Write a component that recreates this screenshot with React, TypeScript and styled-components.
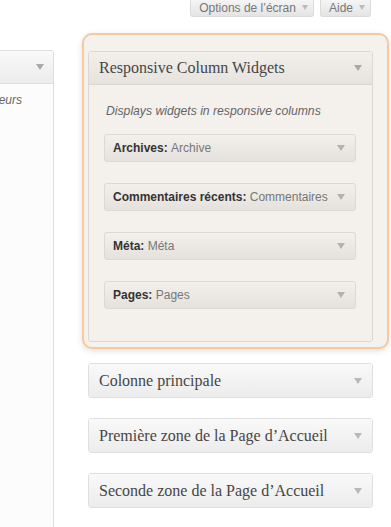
import styled, { createGlobalStyle } from 'styled-components'

const GlobalStyle = createGlobalStyle`
  html, body {
    margin: 0;
    padding: 0;
    background: #fff;
  }
  body {
    font-family: "Liberation Sans", Arial, sans-serif;
  }
  * {
    box-sizing: border-box;
  }
`

const Page = styled.div`
  min-height: 100vh;
  display: flex;
  flex-direction: column;
  overflow: hidden;
`

const ScreenMeta = styled.div`
  display: flex;
  justify-content: flex-end;
  gap: 6px;
  height: 33px;
  padding-right: 20px;
`

const MetaTab = styled.button`
  display: flex;
  align-items: center;
  gap: 6px;
  height: 17px;
  padding: 0 5px 1px 8px;
  border: 1px solid #dcdcdc;
  border-top: none;
  border-radius: 0 0 3px 3px;
  background: linear-gradient(to bottom, #f5f5f5, #e4e4e4);
  color: #777;
  font-family: "Liberation Sans", Arial, sans-serif;
  font-size: 12px;
  line-height: 16px;
`

const Arrow = styled.span<{ $w?: number; $h?: number; $color?: string }>`
  display: inline-block;
  flex: none;
  width: 0;
  height: 0;
  border-left: ${(p) => (p.$w ?? 8) / 2}px solid transparent;
  border-right: ${(p) => (p.$w ?? 8) / 2}px solid transparent;
  border-top: ${(p) => p.$h ?? 6}px solid ${(p) => p.$color ?? '#a9a9a9'};
`

const Columns = styled.div`
  flex: 1;
  display: grid;
  grid-template-columns: 55px minmax(0, 1fr);
`

const LeftCol = styled.div`
  display: flex;
  padding-top: 17px;
  overflow: hidden;
`

const ClippedPanel = styled.div`
  flex: none;
  width: 300px;
  margin-left: -246px;
  display: flex;
  flex-direction: column;
  border: 1px solid #dfdfdf;
  border-bottom: none;
  border-radius: 0 3px 0 0;
  background: #fcfcfc;
`

const PanelHead = styled.div`
  display: flex;
  justify-content: flex-end;
  align-items: center;
  height: 33px;
  padding-right: 9px;
  border-bottom: 1px solid #dfdfdf;
  background: linear-gradient(to bottom, #f9f9f9, #ececec);
`

const PanelText = styled.p`
  margin: 9px 0 0;
  padding-right: 31px;
  text-align: right;
  white-space: nowrap;
  font-size: 12px;
  font-style: italic;
  color: #666;
`

const RightCol = styled.div`
  min-width: 0;
  display: flex;
  flex-direction: column;
  padding: 0 2px 0 27px;
`

const DropZone = styled.div`
  margin-bottom: 14px;
  padding: 16px 14px 5px 4px;
  border: 2px solid #f6c9a0;
  border-radius: 10px;
  background: #f5f1ed;
  box-shadow: 0 2px 6px rgba(0, 0, 0, 0.12);
`

const Sidebar = styled.div<{ $open?: boolean }>`
  margin: ${(p) => (p.$open ? '0' : '0 16px 20px 6px')};
  border: 1px solid ${(p) => (p.$open ? '#dcd7d2' : '#dfdfdf')};
  border-radius: 3px;
  background: ${(p) => (p.$open ? '#f4f0ec' : '#f5f5f5')};
`

const SidebarHead = styled.div<{ $open?: boolean }>`
  display: flex;
  align-items: center;
  justify-content: space-between;
  height: 33px;
  padding: 0 10px;
  border-bottom: ${(p) => (p.$open ? '1px solid #dcd7d2' : 'none')};
  background: ${(p) =>
    p.$open
      ? 'linear-gradient(to bottom, #f3f0ec, #e6e2dd)'
      : 'linear-gradient(to bottom, #f9f9f9, #ececec)'};
  font-family: "Liberation Serif", "Times New Roman", serif;
  font-size: 16px;
  color: #464646;
`

const SidebarBody = styled.div`
  padding: 16px 16px 32px 15px;
`

const Description = styled.p`
  margin: 0 0 13px;
  padding-left: 2px;
  font-size: 12.2px;
  line-height: 20px;
  font-style: italic;
  color: #666;
`

const WidgetList = styled.div`
  display: flex;
  flex-direction: column;
  gap: 21px;
`

const Widget = styled.div`
  display: flex;
  align-items: center;
  gap: 6px;
  min-width: 0;
  height: 28px;
  padding: 0 10px 0 8px;
  border: 1px solid #dcd8d3;
  border-radius: 3px;
  background: linear-gradient(to bottom, #f3f0ec, #e5e1dc);
`

const WidgetTitle = styled.div`
  flex: 1;
  min-width: 0;
  overflow: hidden;
  white-space: nowrap;
  font-size: 12px;
  font-weight: bold;
  color: #333;
`

const InWidgetTitle = styled.span`
  font-weight: normal;
  color: #777;
`

const widgets = [
  { name: 'Archives', title: 'Archive' },
  { name: 'Commentaires récents', title: 'Commentaires récents' },
  { name: 'Méta', title: 'Méta' },
  { name: 'Pages', title: 'Pages' },
]

const closedSidebars = [
  'Colonne principale',
  'Première zone de la Page d’Accueil',
  'Seconde zone de la Page d’Accueil',
]

function App() {
  return (
    <Page>
      <GlobalStyle />
      <ScreenMeta>
        <MetaTab>
          Options de l’écran <Arrow $w={7} $h={5} $color="#bbb" />
        </MetaTab>
        <MetaTab>
          Aide <Arrow $w={7} $h={5} $color="#bbb" />
        </MetaTab>
      </ScreenMeta>
      <Columns>
        <LeftCol>
          <ClippedPanel>
            <PanelHead>
              <Arrow />
            </PanelHead>
            <PanelText>Glissez les widgets pour les lecteurs</PanelText>
          </ClippedPanel>
        </LeftCol>
        <RightCol>
          <DropZone>
            <Sidebar $open>
              <SidebarHead $open>
                Responsive Column Widgets
                <Arrow />
              </SidebarHead>
              <SidebarBody>
                <Description>Displays widgets in responsive columns</Description>
                <WidgetList>
                  {widgets.map((w) => (
                    <Widget key={w.name}>
                      <WidgetTitle>
                        {w.name}: <InWidgetTitle>{w.title}</InWidgetTitle>
                      </WidgetTitle>
                      <Arrow $w={8} $h={6} $color="#b5b2ae" />
                    </Widget>
                  ))}
                </WidgetList>
              </SidebarBody>
            </Sidebar>
          </DropZone>
          {closedSidebars.map((name) => (
            <Sidebar key={name}>
              <SidebarHead>
                {name}
                <Arrow $color="#b9b9b9" />
              </SidebarHead>
            </Sidebar>
          ))}
        </RightCol>
      </Columns>
    </Page>
  )
}

export default App
